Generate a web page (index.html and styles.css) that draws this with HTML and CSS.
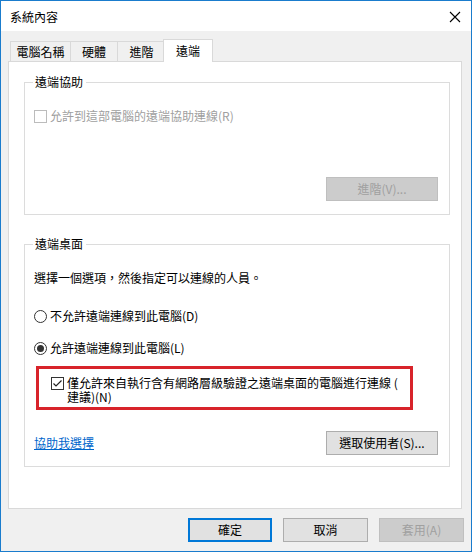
FILE: index.html
```html
<!DOCTYPE html>
<html lang="zh-Hant">
<head>
  <meta charset="UTF-8">
  <meta name="viewport" content="width=device-width, initial-scale=1.0">
  <title>系統內容</title>
  <link rel="stylesheet" href="styles.css">
</head>
<body>
  <div class="window">
    <div class="titlebar">
      <span class="title">系統內容</span>
      <svg class="close" width="12" height="12" viewBox="0 0 12 12">
        <path d="M1 1 L11 11 M11 1 L1 11" stroke="#000" stroke-width="1.1" fill="none"/>
      </svg>
    </div>

    <div class="content">
      <div class="tabs">
        <div class="tab t1">電腦名稱</div>
        <div class="tab t2">硬體</div>
        <div class="tab t3">進階</div>
        <div class="tab active">遠端</div>
      </div>

      <div class="panel">
        <fieldset class="group g1">
          <legend>遠端協助</legend>
          <div class="row disabled r-assist">
            <span class="check off"></span>
            <span>允許到這部電腦的遠端協助連線(R)</span>
          </div>
          <div class="row end r-adv">
            <span class="btn btn-off">進階(V)...</span>
          </div>
        </fieldset>

        <fieldset class="group g2">
          <legend>遠端桌面</legend>
          <div class="row r-desc">選擇一個選項，然後指定可以連線的人員。</div>
          <div class="row r-radio1">
            <span class="radio"></span>
            <span>不允許遠端連線到此電腦(D)</span>
          </div>
          <div class="row r-radio2">
            <span class="radio on"></span>
            <span>允許遠端連線到此電腦(L)</span>
          </div>
          <div class="highlight">
            <span class="check">
              <svg width="11" height="11" viewBox="0 0 11 11">
                <path d="M1.5 5.5 L4 8 L9.5 2.5" stroke="#222" stroke-width="1.2" fill="none"/>
              </svg>
            </span>
            <span class="nla">僅允許來自執行含有網路層級驗證之遠端桌面的電腦進行連線 (<br>建議)(N)</span>
          </div>
          <div class="row between r-users">
            <a class="link" href="#">協助我選擇</a>
            <span class="btn">選取使用者(S)...</span>
          </div>
        </fieldset>
      </div>

      <div class="footer">
        <span class="btn btn-main">確定</span>
        <span class="btn">取消</span>
        <span class="btn btn-off">套用(A)</span>
      </div>
    </div>
  </div>
</body>
</html>
```

FILE: styles.css
```css
body {
  margin: 0;
  padding: 0;
  font-family: "Noto Sans CJK TC", "Noto Sans", sans-serif;
  font-size: 12px;
  color: #000;
}
.window {
  width: 472px;
  height: 552px;
  box-sizing: border-box;
  border: 1px solid #1a7ccd;
  background-color: #f0f0f0;
  display: flex;
  flex-direction: column;
}
.titlebar {
  height: 30px;
  background-color: #fff;
  display: flex;
  align-items: center;
  justify-content: space-between;
  padding: 1px 9px 0 9px;
  box-sizing: border-box;
}
.title {
  line-height: 16px;
}
.close {
  margin-right: 1px;
}
.content {
  padding: 8px 9px 0 7px;
}

/* tabs */
.tabs {
  display: flex;
  align-items: flex-end;
  height: 23px;
  padding-left: 2px;
  margin-bottom: -1px;
  position: relative;
  z-index: 1;
}
.tab {
  height: 20px;
  box-sizing: border-box;
  border: 1px solid #d9d9d9;
  border-bottom: none;
  margin-right: -1px;
  margin-bottom: 1px;
  line-height: 19px;
  text-align: center;
  background-color: #f0f0f0;
}
.t1 { width: 61px; }
.t2 { width: 48px; }
.t3 { width: 49px; }
.tab.active {
  width: 50px;
  height: 23px;
  margin-left: -2px;
  margin-bottom: 0;
  line-height: 21px;
  background-color: #fff;
}
.panel {
  height: 448px;
  box-sizing: border-box;
  border: 1px solid #d9d9d9;
  background-color: #fff;
  padding: 0 11px 0 15px;
}

/* group boxes */
.group {
  margin: 0;
  padding: 0 11px 0 9px;
  border: 1px solid #dcdcdc;
  min-width: 0;
}
.group legend {
  padding: 0 3px 0 2px;
  margin-left: -1px;
  line-height: 16px;
}
.g1 {
  margin-top: 12px;
  padding-bottom: 13px;
}
.g2 {
  margin-top: 21px;
  padding-bottom: 11px;
}
.row {
  display: flex;
  align-items: center;
  line-height: 16px;
}
.end { justify-content: flex-end; }
.between { justify-content: space-between; align-items: center; }
.disabled { color: #a0a0a0; }
.r-assist { margin-top: 18px; }
.r-adv { margin-top: 53px; }
.r-desc { margin-top: 18px; }
.r-radio1 { margin-top: 22px; }
.r-radio2 { margin-top: 16px; }
.r-users { margin-top: 21px; }

.check, .radio {
  width: 13px;
  height: 13px;
  box-sizing: border-box;
  border: 1px solid #333;
  background-color: #fff;
  margin-right: 3px;
  flex: 0 0 auto;
  display: flex;
  align-items: center;
  justify-content: center;
}
.check.off {
  border-color: #bcbcbc;
}
.radio {
  border-radius: 50%;
}
.radio.on::after {
  content: "";
  width: 7px;
  height: 7px;
  border-radius: 50%;
  background-color: #333;
}

.highlight {
  margin: 10px 0 0 2px;
  width: 377px;
  height: 44px;
  box-sizing: border-box;
  border: 3px solid #d8232a;
  padding: 7px 0 0 12px;
  display: flex;
  align-items: flex-start;
}
.highlight .check {
  margin-top: 1px;
}
.nla {
  line-height: 14px;
}

.link {
  color: #0066cc;
  line-height: 16px;
}

/* buttons */
.btn {
  width: 112px;
  height: 24px;
  box-sizing: border-box;
  border: 1px solid #adadad;
  background-color: #e1e1e1;
  display: flex;
  align-items: center;
  justify-content: center;
  line-height: 16px;
}
.btn-off {
  background-color: #cccccc;
  border-color: #bfbfbf;
  color: #a0a0a0;
}
.footer {
  display: flex;
  justify-content: flex-end;
  gap: 11px;
  margin-top: 9px;
  margin-right: -2px;
}
.footer .btn {
  width: 85px;
}
.footer .btn-main {
  width: 84px;
  border: 2px solid #0078d7;
}
```
